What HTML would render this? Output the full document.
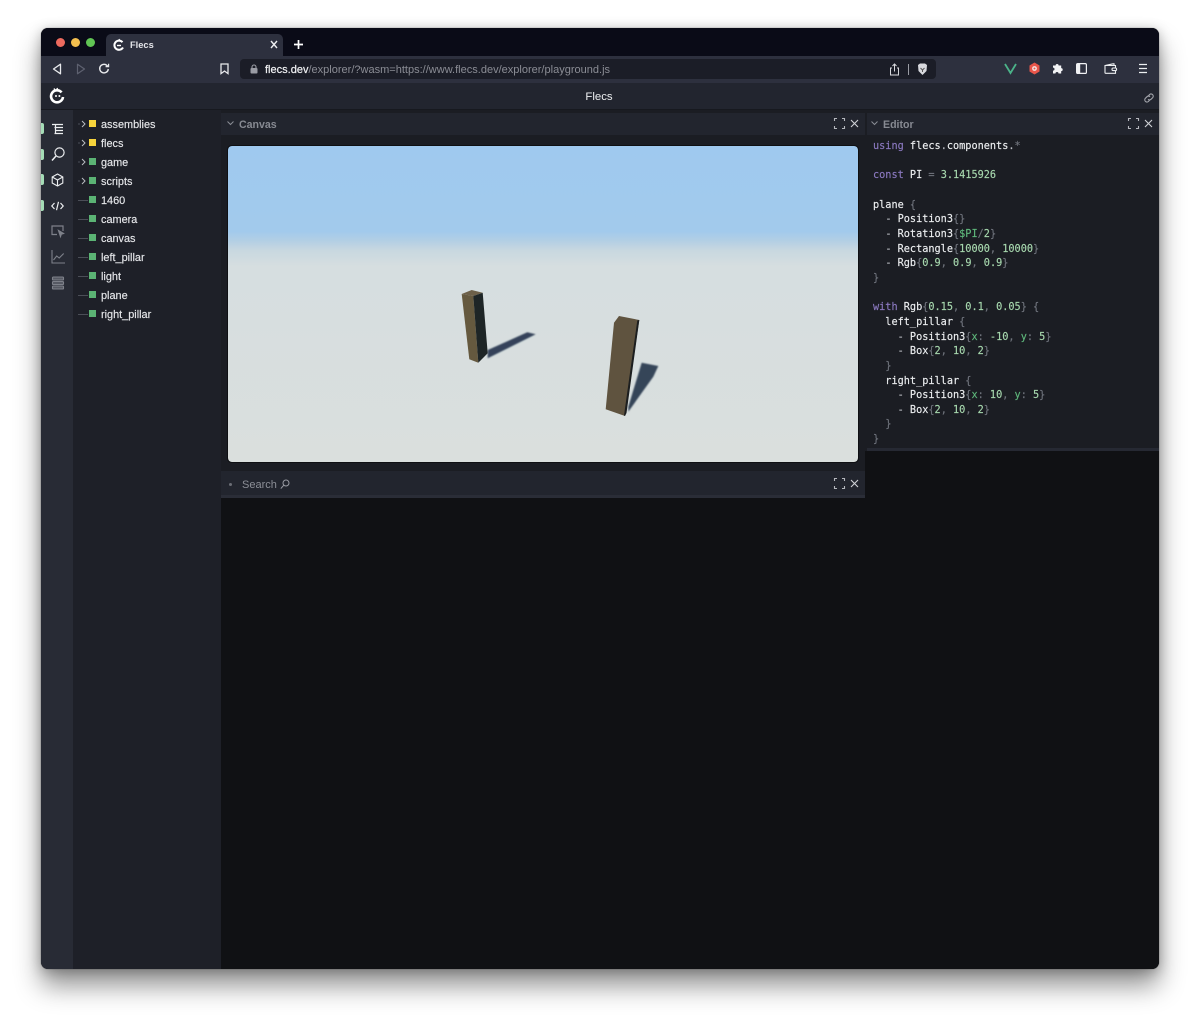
<!DOCTYPE html>
<html><head><meta charset="utf-8"><title>Flecs</title>
<style>
*{box-sizing:border-box}
html,body{margin:0;padding:0;width:1200px;height:1024px;overflow:hidden;background:#fff;font-family:"Liberation Sans",sans-serif}
.a{position:absolute}
#win{position:absolute;left:41px;top:28px;width:1118px;height:941px;border-radius:7px;overflow:hidden;background:#101114;box-shadow:0 0 1px rgba(0,0,0,.5),0 17px 26px rgba(0,0,0,.42),0 2px 12px rgba(0,0,0,.25);filter:none}
#bl{position:absolute;left:0;top:0;width:1118px;height:941px;filter:blur(.3px)}
.t{position:absolute;white-space:nowrap}
.tree{position:absolute;left:60px;font-size:10.9px;color:#e6e7ea;line-height:14px;white-space:nowrap;-webkit-text-stroke:.15px #e6e7ea}
.sq{position:absolute;left:48px;width:7px;height:7px}
.dash{position:absolute;left:37px;width:10px;height:1px;background:#4b4e57}
.pill{position:absolute;left:0;width:3px;height:11px;background:#a5dcb6;border-radius:0 2px 2px 0}
#code{position:absolute;left:832px;top:112px;margin:0;font:10.22px/14.66px "DejaVu Sans Mono","Liberation Mono",monospace;color:#eceef0;white-space:pre;-webkit-text-stroke:.15px currentColor}
.k{color:#8b79c0}.n{color:#a7d8ae}.g{color:#70747d}.v{color:#5fb87c}.d{color:#b9bcc2}
svg{position:absolute;overflow:visible}
</style></head><body>
<div id="win"><div id="bl">
  <!-- tab strip -->
  <div class="a" style="left:0;top:0;width:1118px;height:28px;background:#0a0b17"></div>
  <div class="a" style="left:15px;top:10px;width:9px;height:9px;border-radius:50%;background:#ed6a5e"></div>
  <div class="a" style="left:30px;top:10px;width:9px;height:9px;border-radius:50%;background:#f4bf4f"></div>
  <div class="a" style="left:45px;top:10px;width:9px;height:9px;border-radius:50%;background:#61c554"></div>
  <div class="a" style="left:65px;top:6px;width:177px;height:22px;border-radius:5px 5px 0 0;background:#2d303e"></div>
  <svg style="left:72px;top:10px" width="12" height="14" viewBox="0 0 12 14" fill="none"><path d="M9.5 4.2A4.6 4.6 0 1 0 10 9.5" stroke="#fff" stroke-width="2"/><path d="M4 7.5h4" stroke="#fff" stroke-width="1.4"/><path d="M6 1l1 2" stroke="#fff" stroke-width="1.2"/></svg>
  <div class="t" style="left:89px;top:11px;font-size:9.3px;font-weight:bold;line-height:12px;color:#e4e5e9">Flecs</div>
  <svg style="left:229px;top:12px" width="8" height="9" fill="none" stroke="#eceef0" stroke-width="1.4"><path d="M1 1l6 7M7 1l-6 7"/></svg>
  <svg style="left:252px;top:11px" width="11" height="11" fill="none" stroke="#fff" stroke-width="1.7"><path d="M5.5 1v9M1 5.5h9"/></svg>
  <!-- toolbar -->
  <div class="a" style="left:0;top:28px;width:1118px;height:27px;background:#2d303e"></div>
  <svg style="left:11px;top:35px" width="10" height="12" fill="none" stroke="#e8e9ec" stroke-width="1.3" stroke-linejoin="round"><path d="M8.5 1.2v9.6L1.5 6z"/></svg>
  <svg style="left:35px;top:35px" width="10" height="12" fill="none" stroke="#5e6170" stroke-width="1.2" stroke-linejoin="round"><path d="M1.5 1.2v9.6L8.5 6z"/></svg>
  <svg style="left:57px;top:35px" width="12" height="12" fill="none" stroke="#e8e9ec" stroke-width="1.4"><path d="M9.6 3.2A4.3 4.3 0 1 0 10.3 6"/><path d="M7.6 3.6h3V.8" stroke-width="1.2"/></svg>
  <svg style="left:179px;top:35px" width="9" height="12" fill="none" stroke="#e8e9ec" stroke-width="1.3"><path d="M1 1h7v9.6L4.5 8 1 10.6z"/></svg>
  <div class="a" style="left:199px;top:31px;width:696px;height:20px;border-radius:4px;background:#1b1d27"></div>
  <svg style="left:209px;top:36px" width="8" height="10" fill="#9a9ca4"><rect x="0.5" y="4" width="7" height="5.5" rx="1"/><path d="M2 4.5V3a2 2 0 0 1 4 0v1.5" fill="none" stroke="#9a9ca4" stroke-width="1.1"/></svg>
  <div class="t" style="left:224px;top:35px;font-size:11.02px;line-height:14px;color:#8b8d95"><span style="color:#f0f1f3;-webkit-text-stroke:.2px #f0f1f3">flecs.dev</span>/explorer/?wasm=https://www.flecs.dev/explorer/playground.js</div>
  <svg style="left:848px;top:35px" width="11" height="13" fill="none" stroke="#d8d9dd" stroke-width="1"><path d="M3 5H1.5v7h8V5H8M5.5 8.5V1M3.5 3l2-2 2 2"/></svg>
  <div class="a" style="left:867px;top:36px;width:1px;height:11px;background:#9a9ca4"></div>
  <svg style="left:876px;top:35px" width="11" height="13"><path d="M1 2l2-1.5h5L10 2l-.5 6L5.5 12 1.5 8z" fill="#d8d9de"/><path d="M3.5 5l2 2 2-2M5.5 7v2" stroke="#555" stroke-width="1" fill="none"/></svg>
  <svg style="left:963px;top:35px" width="13" height="11" fill="none"><path d="M1 1l5.5 9L12 1" stroke="#4bb389" stroke-width="1.8"/></svg>
  <svg style="left:988px;top:34px" width="11" height="13"><path d="M5.5 .5l5 3v6l-5 3-5-3v-6z" fill="#e8564b"/><circle cx="5.5" cy="6.5" r="2.4" fill="#f5e9e6"/><circle cx="5.5" cy="6.5" r="1" fill="#e8564b"/></svg>
  <svg style="left:1011px;top:34px" width="12" height="12" fill="#f2f3f5"><path d="M1 3.5h2.6a1.5 1.5 0 1 1 3 0H9.2v2.6a1.5 1.5 0 1 1 0 3V11.5H6.5a1.5 1.5 0 1 0-3 0H1V8.6a1.5 1.5 0 1 0 0-3z"/></svg>
  <svg style="left:1035px;top:35px" width="11" height="11" fill="none" stroke="#f0f1f3" stroke-width="1.2"><rect x=".6" y=".6" width="9.8" height="9.8" rx="1.2"/><rect x="1" y="1" width="3.2" height="9" fill="#f0f1f3" stroke="none"/></svg>
  <svg style="left:1063px;top:35px" width="13" height="11" fill="none" stroke="#eceef0" stroke-width="1.1"><path d="M1 2.5h10.5v7.8H1.8a.8.8 0 0 1-.8-.8V2.5zM1.5 2.4L9 .8h1v1.6"/><rect x="8" y="5" width="4.6" height="2.6" rx="1.2" fill="#2d303e"/></svg>
  <svg style="left:1097px;top:35px" width="10" height="11" stroke="#eceef0" stroke-width="1.3"><path d="M1 1.5h8M1 5.5h8M1 9.5h8"/></svg>
  <!-- app header -->
  <div class="a" style="left:0;top:55px;width:1118px;height:27px;background:#22252f"></div>
  <div class="a" style="left:0;top:81px;width:1118px;height:1px;background:#17191f"></div>
  <svg style="left:7px;top:58px" width="18" height="20" viewBox="0 0 18 20" fill="none"><path d="M13.6 6.4A6 6 0 1 0 15 11" stroke="#fff" stroke-width="2.6"/><path d="M9 2l1 2.5M6 2.5l1 1.8" stroke="#fff" stroke-width="1.4"/><circle cx="8" cy="10" r="1" fill="#fff"/><circle cx="11.4" cy="10" r="1" fill="#fff"/></svg>
  <div class="t" style="left:0;top:61px;width:1116px;text-align:center;font-size:11.4px;line-height:17px;color:#eceef0">Flecs</div>
  <svg style="left:1102px;top:64px" width="12" height="12" fill="none" stroke="#a3a5ac" stroke-width="1.1"><path d="M5 4.2l1.6-1.7a2.2 2.2 0 0 1 3.1 3.1L8 7.3a2.2 2.2 0 0 1-3 0"/><path d="M7 7.8L5.4 9.5a2.2 2.2 0 0 1-3.1-3.1L4 4.7a2.2 2.2 0 0 1 3 0"/></svg>
  <!-- panels -->
  <div class="a" style="left:0;top:82px;width:32px;height:859px;background:#282b35"></div>
  <div class="a" style="left:32px;top:82px;width:148px;height:859px;background:#1e2028"></div>
  <div class="a" style="left:180px;top:82px;width:938px;height:859px;background:#101114"></div>
  <div class="a" style="left:180px;top:82px;width:938px;height:341px;background:#1b1d23"></div>
  <div class="a" style="left:180px;top:82px;width:644px;height:386px;background:#1b1d23"></div>
  <!-- rail -->
  <div class="pill" style="top:95px"></div><div class="pill" style="top:121px"></div><div class="pill" style="top:146px"></div><div class="pill" style="top:172px"></div>
  <svg style="left:10px;top:95px" width="13" height="13" fill="none" stroke="#eceef0" stroke-width="1.2"><path d="M1 1.5h11M3.5 4.5h8.5M5 7.5h7M3.5 10.5h8.5M4.5 1.5v9"/></svg>
  <svg style="left:10px;top:119px" width="14" height="15" fill="none" stroke="#eceef0" stroke-width="1.2"><circle cx="8.5" cy="5.5" r="4.6"/><path d="M5 9L1 13.5" stroke-width="1.5"/></svg>
  <svg style="left:10px;top:145px" width="13" height="14" fill="none" stroke="#eceef0" stroke-width="1.1"><path d="M6.5 1l5.3 3v6l-5.3 3-5.3-3V4zM1.2 4l5.3 3 5.3-3M6.5 7v6"/></svg>
  <svg style="left:10px;top:173px" width="13" height="10" fill="none" stroke="#eceef0" stroke-width="1.2"><path d="M3.5 2L.8 5l2.7 3M9.5 2l2.7 3-2.7 3M7.5 .8L5.5 9.2"/></svg>
  <svg style="left:10px;top:197px" width="14" height="13" fill="none" stroke="#7e818a" stroke-width="1.2"><path d="M6 9.5H1V1h11v5"/><path d="M7.5 5.5l5 3-2.2.7-.8 2.3z" fill="#7e818a"/></svg>
  <svg style="left:10px;top:222px" width="14" height="14" fill="none" stroke="#7e818a" stroke-width="1.1"><path d="M1 0v13h13M2.5 10l3.2-4 2.5 2 4.5-4.5"/></svg>
  <svg style="left:10px;top:248px" width="14" height="14" fill="none" stroke="#7e818a" stroke-width="1.1"><rect x="1.5" y="1" width="11" height="3" rx=".8" fill="#565963"/><rect x="1.5" y="5.5" width="11" height="3" rx=".8" fill="#565963"/><rect x="1.5" y="10" width="11" height="3" rx=".8" fill="#565963"/></svg>
  <!-- tree -->
  <svg style="left:37px;top:92px" width="9" height="8" fill="none" stroke="#b9bcc2" stroke-width="1"><path d="M0 4h2" stroke="#4b4e57"/><path d="M4 1l3 3-3 3"/></svg>
  <svg style="left:37px;top:111px" width="9" height="8" fill="none" stroke="#b9bcc2" stroke-width="1"><path d="M0 4h2" stroke="#4b4e57"/><path d="M4 1l3 3-3 3"/></svg>
  <svg style="left:37px;top:130px" width="9" height="8" fill="none" stroke="#b9bcc2" stroke-width="1"><path d="M0 4h2" stroke="#4b4e57"/><path d="M4 1l3 3-3 3"/></svg>
  <svg style="left:37px;top:149px" width="9" height="8" fill="none" stroke="#b9bcc2" stroke-width="1"><path d="M0 4h2" stroke="#4b4e57"/><path d="M4 1l3 3-3 3"/></svg>
  <div class="dash" style="top:172px"></div><div class="dash" style="top:191px"></div><div class="dash" style="top:210px"></div><div class="dash" style="top:229px"></div><div class="dash" style="top:248px"></div><div class="dash" style="top:267px"></div><div class="dash" style="top:286px"></div>
  <div class="sq" style="top:92px;background:#f6d33c"></div><div class="sq" style="top:111px;background:#f6d33c"></div>
  <div class="sq" style="top:130px;background:#5bb374"></div><div class="sq" style="top:149px;background:#5bb374"></div><div class="sq" style="top:168px;background:#5bb374"></div><div class="sq" style="top:187px;background:#5bb374"></div><div class="sq" style="top:206px;background:#5bb374"></div><div class="sq" style="top:225px;background:#5bb374"></div><div class="sq" style="top:244px;background:#5bb374"></div><div class="sq" style="top:263px;background:#5bb374"></div><div class="sq" style="top:282px;background:#5bb374"></div>
  <div class="tree" style="top:90px">assemblies</div><div class="tree" style="top:109px">flecs</div><div class="tree" style="top:128px">game</div><div class="tree" style="top:147px">scripts</div><div class="tree" style="top:166px">1460</div><div class="tree" style="top:185px">camera</div><div class="tree" style="top:204px">canvas</div><div class="tree" style="top:223px">left_pillar</div><div class="tree" style="top:242px">light</div><div class="tree" style="top:261px">plane</div><div class="tree" style="top:280px">right_pillar</div>
  <!-- canvas panel -->
  <div class="a" style="left:180px;top:85px;width:644px;height:22px;background:#22252e"></div>
  <svg style="left:186px;top:93px" width="7" height="5" fill="none" stroke="#8a8d95"><path d="M.5 .5l3 3 3-3"/></svg>
  <div class="t" style="left:198px;top:90px;font-size:10.6px;font-weight:bold;line-height:14px;color:#878a92">Canvas</div>
  <svg style="left:793px;top:90px" width="11" height="11" fill="none" stroke="#b4b6bc" stroke-width="1.1"><path d="M.5 3V.5H3M8 .5h2.5V3M10.5 8v2.5H8M3 10.5H.5V8"/></svg>
  <svg style="left:809px;top:91px" width="9" height="9" fill="none" stroke="#d0d2d6" stroke-width="1.1"><path d="M1 1l7 7M8 1L1 8"/></svg>
  <svg style="left:187px;top:118px" width="630" height="316" viewBox="0 0 630 316">
    <defs>
      <linearGradient id="sky" x1="0" y1="0" x2="0" y2="1"><stop offset="0" stop-color="#9fc9ef"/><stop offset=".27" stop-color="#a2caec"/><stop offset=".3" stop-color="#b3cfe4"/><stop offset=".33" stop-color="#c8d8e0"/><stop offset=".38" stop-color="#d6dee0"/><stop offset="1" stop-color="#dadfdd"/></linearGradient>
      <filter id="b" x="-20%" y="-20%" width="140%" height="140%"><feGaussianBlur stdDeviation=".9"/></filter>
      <clipPath id="rr"><rect width="630" height="316" rx="4"/></clipPath>
    </defs>
    <g clip-path="url(#rr)">
    <rect width="630" height="316" fill="url(#sky)"/>
    <path d="M259.7 204L299.3 186.3 307.7 188.3 259.7 212.3z" fill="#34435a" filter="url(#b)"/>
    <path d="M400.3 260.7L413.7 216.7 430.3 220 425.3 230.7 400.3 265.7z" fill="#344458" filter="url(#b)"/>
    <path d="M233.7 148L243.7 144 254.7 146.7 245.3 150z" fill="#6d6049"/>
    <path d="M233.7 148L245.3 150 250.3 216.7 241.3 213.3z" fill="#65593f"/>
    <path d="M245.3 150L254.7 146.7 259.7 207.3 250.3 216.7z" fill="#1e2526"/>
    <path d="M391 170L411.3 174 397 270 377.7 263.3 386 176.7z" fill="#5f533f"/>
    <path d="M411.3 174L409.3 174.5 396 269.5 397 270 398.5 267z" fill="#1c1e1f"/>
    </g>
    <rect x="-.5" y="-.5" width="631" height="317" rx="4" fill="none" stroke="#0f1013" stroke-width="1"/>
  </svg>
  <!-- search panel -->
  <div class="a" style="left:180px;top:443px;width:644px;height:27px;background:#22252e;border-bottom:3px solid #2a2d37"></div>
  <div class="a" style="left:188px;top:455px;width:3px;height:3px;border-radius:50%;background:#6b6e76"></div>
  <div class="t" style="left:201px;top:450px;font-size:11px;line-height:14px;color:#8c8f97">Search</div>
  <svg style="left:239px;top:451px" width="10" height="11" fill="none" stroke="#9a9ca4" stroke-width="1"><circle cx="6" cy="4" r="3"/><path d="M3.8 6.2L.8 9.6"/></svg>
  <svg style="left:793px;top:450px" width="11" height="11" fill="none" stroke="#b4b6bc" stroke-width="1.1"><path d="M.5 3V.5H3M8 .5h2.5V3M10.5 8v2.5H8M3 10.5H.5V8"/></svg>
  <svg style="left:809px;top:451px" width="9" height="9" fill="none" stroke="#d0d2d6" stroke-width="1.1"><path d="M1 1l7 7M8 1L1 8"/></svg>
  <!-- editor -->
  <div class="a" style="left:826px;top:85px;width:292px;height:22px;background:#22252e"></div>
  <div class="a" style="left:826px;top:420px;width:292px;height:3px;background:#262933"></div>
  <svg style="left:830px;top:93px" width="7" height="5" fill="none" stroke="#8a8d95"><path d="M.5 .5l3 3 3-3"/></svg>
  <div class="t" style="left:842px;top:90px;font-size:10.6px;font-weight:bold;line-height:14px;color:#878a92">Editor</div>
  <svg style="left:1087px;top:90px" width="11" height="11" fill="none" stroke="#b4b6bc" stroke-width="1.1"><path d="M.5 3V.5H3M8 .5h2.5V3M10.5 8v2.5H8M3 10.5H.5V8"/></svg>
  <svg style="left:1103px;top:91px" width="9" height="9" fill="none" stroke="#d0d2d6" stroke-width="1.1"><path d="M1 1l7 7M8 1L1 8"/></svg>
<pre id="code"><span class="k">using</span> flecs<span class="d">.</span>components<span class="d">.</span><span class="g">*</span>

<span class="k">const</span> PI <span class="g">=</span> <span class="n">3.1415926</span>

plane <span class="g">{</span>
  <span class="d">-</span> Position3<span class="g">{}</span>
  <span class="d">-</span> Rotation3<span class="g">{</span><span class="v">$PI</span><span class="g">/</span><span class="n">2</span><span class="g">}</span>
  <span class="d">-</span> Rectangle<span class="g">{</span><span class="n">10000</span><span class="g">,</span> <span class="n">10000</span><span class="g">}</span>
  <span class="d">-</span> Rgb<span class="g">{</span><span class="n">0.9</span><span class="g">,</span> <span class="n">0.9</span><span class="g">,</span> <span class="n">0.9</span><span class="g">}</span>
<span class="g">}</span>

<span class="k">with</span> Rgb<span class="g">{</span><span class="n">0.15</span><span class="g">,</span> <span class="n">0.1</span><span class="g">,</span> <span class="n">0.05</span><span class="g">}</span> <span class="g">{</span>
  left_pillar <span class="g">{</span>
    <span class="d">-</span> Position3<span class="g">{</span><span class="v">x</span><span class="g">:</span> <span class="n">-10</span><span class="g">,</span> <span class="v">y</span><span class="g">:</span> <span class="n">5</span><span class="g">}</span>
    <span class="d">-</span> Box<span class="g">{</span><span class="n">2</span><span class="g">,</span> <span class="n">10</span><span class="g">,</span> <span class="n">2</span><span class="g">}</span>
  <span class="g">}</span>
  right_pillar <span class="g">{</span>
    <span class="d">-</span> Position3<span class="g">{</span><span class="v">x</span><span class="g">:</span> <span class="n">10</span><span class="g">,</span> <span class="v">y</span><span class="g">:</span> <span class="n">5</span><span class="g">}</span>
    <span class="d">-</span> Box<span class="g">{</span><span class="n">2</span><span class="g">,</span> <span class="n">10</span><span class="g">,</span> <span class="n">2</span><span class="g">}</span>
  <span class="g">}</span>
<span class="g">}</span></pre>
</div></div>
</body></html>
